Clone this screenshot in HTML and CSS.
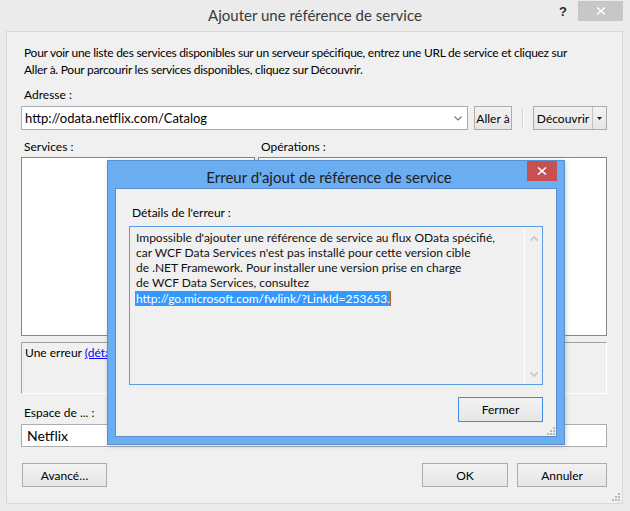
FILE: index.html
```html
<!DOCTYPE html>
<html lang="fr">
<head>
<meta charset="utf-8">
<title>Ajouter une référence de service</title>
<link rel="stylesheet" href="styles.css">
</head>
<body>
<div class="window">
  <div class="titlebar">
    <div class="title">Ajouter une référence de service</div>
    <div class="controls">
      <div class="help">?</div>
      <div class="close gray"><svg width="10" height="8" viewBox="0 0 10 8"><path d="M1 0.5 L9 7.5 M9 0.5 L1 7.5" stroke="#fff" stroke-width="1.5"/></svg></div>
    </div>
  </div>
  <div class="client">
    <p class="intro">Pour voir une liste des services disponibles sur un serveur spécifique, entrez une URL de service et cliquez sur<br>Aller à. Pour parcourir les services disponibles, cliquez sur Découvrir.</p>
    <div class="lbl">Adresse :</div>
    <div class="addr-row">
      <div class="combo">
        <span class="combo-text">http://odata.netflix.com/Catalog</span>
        <svg class="chev" width="8" height="5" viewBox="0 0 8 5"><path d="M0.5 0.5 L4 4 L7.5 0.5" fill="none" stroke="#7a7a7a" stroke-width="1.2"/></svg>
      </div>
      <div class="btn go">Aller à</div>
      <div class="sep"></div>
      <div class="btn split">
        <span class="split-main">Découvrir</span>
        <span class="split-arrow"><svg width="5" height="3" viewBox="0 0 5 3"><path d="M0 0 H5 L2.5 3 Z" fill="#222"/></svg></span>
      </div>
    </div>
    <div class="lists">
      <div class="col services">
        <div class="lbl">Services :</div>
        <div class="listbox"></div>
      </div>
      <div class="col ops">
        <div class="lbl">Opérations :</div>
        <div class="listbox"></div>
      </div>
    </div>
    <div class="status">Une erreur <a href="#" class="link">(détails)</a></div>
    <div class="lbl ns-lbl">Espace de ... :</div>
    <div class="ns">Netflix</div>
    <div class="footer">
      <div class="btn adv">Avancé…</div>
      <div class="spacer"></div>
      <div class="btn ok">OK</div>
      <div class="btn cancel">Annuler</div>
    </div>
    <svg class="grip main-grip" width="8" height="8" viewBox="0 0 8 8"><g fill="#b9b9b9"><rect x="6" y="0" width="2" height="2"/><rect x="3" y="3" width="2" height="2"/><rect x="6" y="3" width="2" height="2"/><rect x="0" y="6" width="2" height="2"/><rect x="3" y="6" width="2" height="2"/><rect x="6" y="6" width="2" height="2"/></g></svg>
  </div>

  <div class="dialog">
    <div class="dlg-titlebar">
      <div class="dlg-title">Erreur d'ajout de référence de service</div>
      <div class="close red"><svg width="10" height="8" viewBox="0 0 10 8"><path d="M1 0.5 L9 7.5 M9 0.5 L1 7.5" stroke="#fff" stroke-width="1.6"/></svg></div>
    </div>
    <div class="dlg-client">
      <div class="dlg-lbl">Détails de l'erreur :</div>
      <div class="errbox">
        <div class="errtext">Impossible d'ajouter une référence de service au flux OData spécifié,<br>car WCF Data Services n'est pas installé pour cette version cible<br>de .NET Framework. Pour installer une version prise en charge<br>de WCF Data Services, consultez<br><span class="sel">http://go.microsoft.com/fwlink/?LinkId=253653.</span></div>
        <div class="vscroll">
          <svg width="8" height="5" viewBox="0 0 8 5"><path d="M0.5 4.5 L4 1 L7.5 4.5" fill="none" stroke="#c4c4c4" stroke-width="1.6"/></svg>
          <svg width="8" height="5" viewBox="0 0 8 5"><path d="M0.5 0.5 L4 4 L7.5 0.5" fill="none" stroke="#c4c4c4" stroke-width="1.6"/></svg>
        </div>
      </div>
      <div class="dlg-footer">
        <div class="btn fermer">Fermer</div>
      </div>
      <svg class="grip dlg-grip" width="8" height="8" viewBox="0 0 8 8"><g fill="#b9b9b9"><rect x="6" y="0" width="2" height="2"/><rect x="3" y="3" width="2" height="2"/><rect x="6" y="3" width="2" height="2"/><rect x="0" y="6" width="2" height="2"/><rect x="3" y="6" width="2" height="2"/><rect x="6" y="6" width="2" height="2"/></g></svg>
    </div>
  </div>
</div>
</body>
</html>
```

FILE: styles.css
```css
* { box-sizing: border-box; }
html, body { margin: 0; padding: 0; }
body {
  width: 630px;
  height: 511px;
  overflow: hidden;
  background: #ebebeb;
  font-family: "Lato", "Liberation Sans", sans-serif;
  font-size: 12px;
  color: #000;
}
.window {
  position: relative;
  width: 630px;
  height: 511px;
  display: flex;
  flex-direction: column;
}

/* ---- main title bar ---- */
.titlebar {
  height: 31px;
  flex: none;
  display: grid;
}
.titlebar > * { grid-area: 1 / 1; }
.title {
  text-align: center;
  font-size: 15px;
  line-height: 31px;
  color: #3a3a3a;
}
.controls {
  justify-self: end;
  display: flex;
  align-items: flex-start;
}
.help {
  width: 14px;
  margin-right: 8px;
  text-align: center;
  font-family: "Liberation Sans", sans-serif;
  font-weight: bold;
  font-size: 13px;
  line-height: 24px;
  color: #2a2a2a;
}
.close {
  display: flex;
  align-items: center;
  justify-content: center;
}
.close.gray {
  width: 45px;
  height: 20px;
  margin-top: 1px;
  margin-right: 7px;
  background: #c7c7c7;
}

/* ---- main client ---- */
.client {
  position: relative;
  flex: none;
  height: 473px;
  margin: 0 7px 0 6px;
  border: 1px solid #d9d9d9;
  background: #f0f0f0;
  padding: 12px 15px 16px 14px;
  display: flex;
  flex-direction: column;
}
.intro {
  margin: 0 0 9px 3px;
  line-height: 17px;
  white-space: nowrap;
  letter-spacing: -0.27px;
}
.lbl {
  line-height: 16px;
  height: 16px;
  padding-left: 3px;
}
.addr-row {
  margin-top: 3px;
  height: 24px;
  display: flex;
}
.combo {
  width: 447px;
  height: 24px;
  background: #fff;
  border: 1px solid #abadb3;
  display: flex;
  align-items: center;
  padding: 0 5px 0 3px;
}
.combo-text { flex: 1; font-size: 13px; }
.btn {
  height: 24px;
  border: 1px solid #acacac;
  background: linear-gradient(#f2f2f2, #e6e6e6);
  display: flex;
  align-items: center;
  justify-content: center;
  color: #000;
}
.go { width: 38px; margin-left: 6px; }
.sep {
  width: 2px;
  height: 20px;
  margin: 2px 9px 0 10px;
  border-left: 1px solid #d5d5d5;
  border-right: 1px solid #fbfbfb;
}
.split {
  width: 74px;
  justify-content: flex-start;
  align-items: stretch;
}
.split-main {
  flex: 1;
  display: flex;
  align-items: center;
  justify-content: center;
  border-right: 1px solid #c4c4c4;
}
.split-arrow {
  width: 13px;
  display: flex;
  align-items: center;
  justify-content: center;
}

.lists {
  margin-top: 9px;
  display: flex;
  gap: 3px;
}
.col { display: flex; flex-direction: column; }
.services { width: 234px; }
.ops { flex: 1; }
.listbox {
  margin-top: 2px;
  height: 179px;
  background: #fff;
  border: 1px solid #828790;
}

.status {
  margin-top: 6px;
  height: 52px;
  border: 1px solid;
  border-color: #a0a0a0 #fff #fff #a0a0a0;
  padding: 2px 3px;
  line-height: 16px;
}
.link { color: #0000ff; text-decoration: underline; }

.ns-lbl { margin-top: 11px; }
.ns {
  margin-top: 3px;
  height: 23px;
  background: #fff;
  border: 1px solid #abadb3;
  padding-left: 5px;
  font-size: 14px;
  line-height: 21px;
}

.footer {
  margin-top: 16px;
  display: flex;
  gap: 9px;
}
.spacer { flex: 1; }
.adv { width: 85px; margin-left: 1px; }
.ok { width: 86px; }
.cancel { width: 90px; }

.grip { position: absolute; }
.main-grip { right: 2px; bottom: 2px; }

/* ---- error dialog (floating window) ---- */
.dialog {
  position: absolute;
  left: 107px;
  top: 160px;
  width: 458px;
  height: 285px;
  background: #6badf1;
  border: 1px solid #5790d2;
  display: flex;
  flex-direction: column;
  box-shadow: 1px 1px 5px rgba(0, 0, 0, 0.18);
}
.dlg-titlebar {
  height: 27px;
  flex: none;
  display: grid;
}
.dlg-titlebar > * { grid-area: 1 / 1; }
.dlg-title {
  padding: 5px 14px 0 0;
  text-align: center;
  font-size: 15px;
  line-height: 22px;
  color: #1e1e1e;
}
.close.red {
  justify-self: end;
  width: 30px;
  height: 20px;
  margin-right: 7px;
  background: #c75050;
}
.dlg-client {
  position: relative;
  flex: none;
  height: 249px;
  margin: 0 7px;
  background: #f0f0f0;
  border: 1px solid #5a8ed0;
  padding: 16px 13px 14px 13px;
  display: flex;
  flex-direction: column;
}
.dlg-lbl {
  padding-left: 3px;
  line-height: 16px;
}
.errbox {
  margin-top: 5px;
  height: 159px;
  border: 1px solid #5b9ee6;
  display: flex;
}
.errtext {
  flex: 1;
  padding: 2.5px 0 0 6px;
  line-height: 15.25px;
  white-space: nowrap;
  color: #111;
}
.sel {
  background: #3399ff;
  color: #fff;
  margin-left: -1px;
  padding-left: 1px;
  border-right: 1px solid #b8641e;
}
.vscroll {
  width: 18px;
  border-left: 1px solid #fff;
  display: flex;
  flex-direction: column;
  justify-content: space-between;
  align-items: center;
  padding: 9px 0 7px;
}
.dlg-footer {
  margin-top: 12px;
  display: flex;
  justify-content: flex-end;
}
.fermer {
  width: 85px;
  height: 25px;
  border-color: #3c8fe3;
}
.dlg-grip { right: 1px; bottom: 1px; }
```
